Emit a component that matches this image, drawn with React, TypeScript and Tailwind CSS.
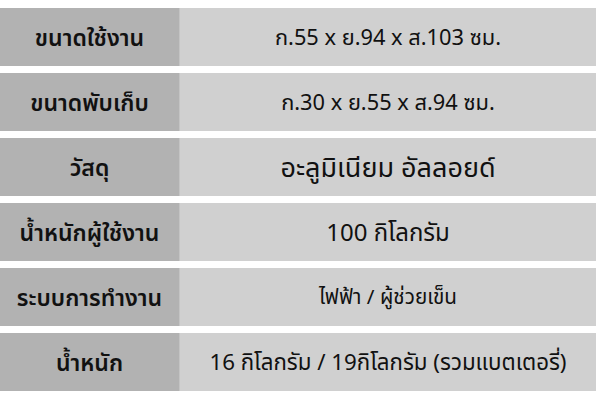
import type React from "react"

const rows: { label: string; value: string; size: string }[] = [
  { label: "ขนาดใช้งาน", value: "ก.55 x ย.94 x ส.103 ซม.", size: "text-[21.8px]" },
  { label: "ขนาดพับเก็บ", value: "ก.30 x ย.55 x ส.94 ซม.", size: "text-[21.8px]" },
  { label: "วัสดุ", value: "อะลูมิเนียม อัลลอยด์", size: "text-[27px]" },
  { label: "น้ำหนักผู้ใช้งาน", value: "100 กิโลกรัม", size: "text-[24px]" },
  { label: "ระบบการทำงาน", value: "ไฟฟ้า / ผู้ช่วยเข็น", size: "text-[20.7px]" },
  { label: "น้ำหนัก", value: "16 กิโลกรัม / 19กิโลกรัม (รวมแบตเตอรี่)", size: "text-[22.3px]" },
]

const App: React.FC = () => {
  return (
    <div className="w-[596px] h-[400px] bg-white pt-2 flex flex-col gap-[7px] font-['Noto_Sans','Noto_Sans_Thai',sans-serif] text-[#111]">
      {rows.map((row) => (
        <div key={row.label} className="flex h-[58px]">
          <div className="w-[179px] bg-[#b2b2b2] flex items-center justify-center text-[23px] font-semibold">
            {row.label}
          </div>
          <div className={`flex-1 bg-[#d0d0d0] border-l border-[#c4c4c4] flex items-center justify-center ${row.size}`}>
            {row.value}
          </div>
        </div>
      ))}
    </div>
  )
}

export default App
